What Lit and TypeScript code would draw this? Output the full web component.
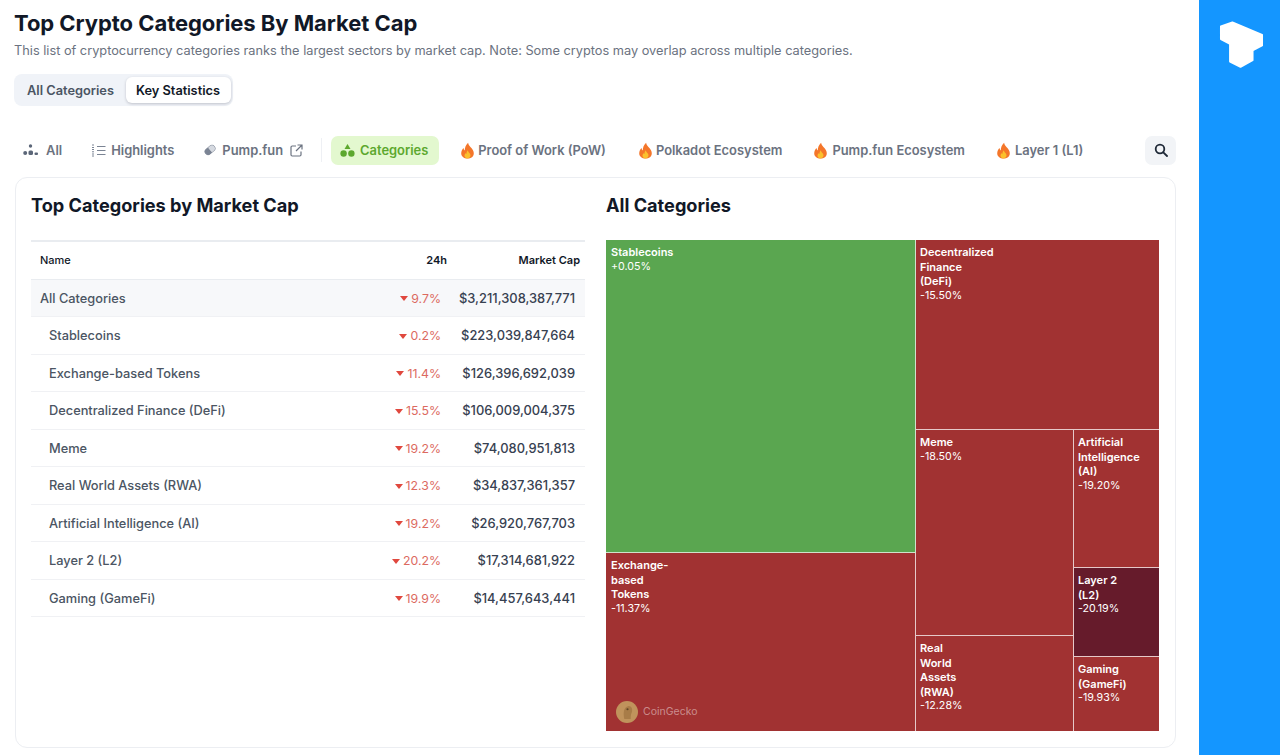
import { LitElement, html, css } from "lit";
import { customElement } from "lit/decorators.js";

const flame = html`<svg class="flame" viewBox="0 0 16 18" width="15" height="17"><path fill="#f4762a" d="M8.600.6c.5 2.700 2.200 3.900 3.600 5.700 1.400 1.700 2.500 3.400 2.500 5.500 0 3.500-2.900 5.800-6.700 5.800S1.300 15.300 1.300 11.900c0-2.300 1.100-4.100 2.500-5.500.1 1.200.5 2 1.300 2.600C5 5.800 6.300 2.700 8.600.6z"/><path fill="#fbc02d" d="M8.200 8.600c.3 1.400 1.100 2 1.900 3 .7.800 1.100 1.600 1.100 2.500 0 1.900-1.400 3.300-3.200 3.300s-3.200-1.300-3.200-3.100c0-1.100.5-2 1.200-2.700.1.500.3.900.7 1.200.1-1.500.7-3 1.500-4.200z"/></svg>`;

const rows: [string, string, string, boolean?][] = [
  ["All Categories", "9.7%", "$3,211,308,387,771", true],
  ["Stablecoins", "0.2%", "$223,039,847,664"],
  ["Exchange-based Tokens", "11.4%", "$126,396,692,039"],
  ["Decentralized Finance (DeFi)", "15.5%", "$106,009,004,375"],
  ["Meme", "19.2%", "$74,080,951,813"],
  ["Real World Assets (RWA)", "12.3%", "$34,837,361,357"],
  ["Artificial Intelligence (AI)", "19.2%", "$26,920,767,703"],
  ["Layer 2 (L2)", "20.2%", "$17,314,681,922"],
  ["Gaming (GameFi)", "19.9%", "$14,457,643,441"],
];

@customElement("app-root")
export class AppRoot extends LitElement {
  static styles = css`
    :host { display: flex; width: 1280px; height: 755px; overflow: hidden; background: #fff;
      font-family: Inter, "Noto Sans", sans-serif; color: #111827; }
    .main { width: 1199px; padding: 10px 23px 0 14px; box-sizing: border-box; }
    .side { width: 81px; background: #1496ff; padding: 20px 0 0 20px; box-sizing: border-box; }
    h1 { margin: 0; font-size: 22px; line-height: 26px; font-weight: 700; color: #111827; letter-spacing: -0.05px; }
    .sub { margin: 6px 0 0; font-size: 12.78px; line-height: 18px; color: #6b7280; }
    .seg { display: inline-flex; margin-top: 14px; background: #f0f3f8; border-radius: 8px; padding: 3px 2px 3px 0; height: 32px; box-sizing: border-box; vertical-align: top; }
    .seg span { display: flex; align-items: center; font-size: 12.8px; font-weight: 600; color: #4b5563; padding: 0 12px 0 13px; border-radius: 6px; }
    .seg .on { background: #fff; color: #111827; padding: 0 11px 0 10px; box-shadow: 0 1px 3px rgba(17,24,39,.22); }
    .tabs { display: flex; align-items: center; margin-top: 29px; height: 30px; font-size: 12.9px; font-weight: 600; color: #6b7280; }
    .tab { display: flex; align-items: center; gap: 5px; white-space: nowrap; }
    .a { margin-left: 9px; gap: 8px; }
    .h { margin-left: 29px; }
    .p { margin-left: 29px; }
    .sep { width: 1px; height: 24px; background: #eef0f4; margin: 0 9px 0 18px; }
    .cat { background: #e3f8cf; color: #5ca82e; border-radius: 7px; height: 29px; padding: 0 11px 0 9px; }
    .f1 { margin-left: 21px; gap: 3px; }
    .f2 { margin-left: 32px; gap: 3px; }
    .f3 { margin-left: 31px; gap: 4px; }
    .f4 { margin-left: 31px; gap: 4px; }
    .search { margin-left: auto; width: 31px; height: 29px; border-radius: 7px; background: #f2f4f7; display: flex; align-items: center; justify-content: center; }
    .card { margin: 12px 0 0 1px; height: 571px; border: 1px solid #eceef2; border-radius: 12px; box-sizing: border-box; padding: 14px 16px 0 15px; display: flex; }
    .left { width: 554px; }
    .right { margin-left: 21px; width: 553px; }
    h2 { margin: 0; font-size: 18.15px; line-height: 26px; font-weight: 700; color: #111827; }
    .table { margin-top: 22px; border-top: 2px solid #e9ecf0; }
    .row { display: flex; align-items: center; height: 37.5px; box-sizing: border-box; border-bottom: 1px solid #f0f1f4; font-size: 12.8px; color: #4b5563; }
    .row.head { height: 37.8px; padding-bottom: 1px; border-bottom-color: #e9ecf0; font-size: 11px; font-weight: 600; color: #111827; }
    .row.all { background: #f7f8fa; }
    .name { flex: 1; padding-left: 18px; font-weight: 500; }
    .all .name, .head .name { padding-left: 9px; }
    .pct { width: 90px; display: flex; justify-content: flex-end; align-items: center; gap: 3px; color: #dc6a5f; font-size: 12.3px; }
    .head .pct { color: #111827; width: 96px; font-size: 11px; }
    .cap { width: 144px; text-align: right; padding-right: 10px; box-sizing: border-box; font-weight: 500; color: #374151; font-size: 12.9px; }
    .head .cap { width: 138px; padding-right: 5px; font-size: 11px; color: #111827; font-weight: 600; }
    .tri { width: 0; height: 0; border-left: 4.500px solid transparent; border-right: 4.500px solid transparent; border-top: 5px solid #e0483e; margin-top: 1px; }
    .map { margin-top: 22px; height: 491px; width: 553px; display: flex; font-size: 10.7px; line-height: 14.6px; color: #fff; }
    .col { display: flex; flex-direction: column; }
    .r { display: flex; }
    .t { box-sizing: border-box; padding: 5px 4px; background: #a13232; border-right: 1px solid #e6c9c9; border-bottom: 1px solid #e6c9c9; position: relative; }
    .t b { display: block; font-weight: 600; font-size: 11px; }
    .lead { padding-left: 5px; }
    .end { border-right: 0; }
    .bot { border-bottom: 0; }
    .green { background: #5aa650; border-color: #cfe3cb; }
    .dark { background: #661b2b; }
    .gecko { position: absolute; left: 10px; bottom: 8px; display: flex; align-items: center; gap: 5px; font-size: 10.5px; color: rgba(255,255,255,.45); }
    .coin { width: 22px; height: 22px; border-radius: 50%; background: #c0935c; display: flex; align-items: center; justify-content: center; }
  `;

  cell(name: string[], val: string, w: number, h: number, cls = "") {
    return html`<div class="t ${cls}" style="width:${w}px;height:${h}px">
      <b>${name.map((n) => html`${n}<br />`)}</b>${val}
    </div>`;
  }

  render() {
    return html`
      <div class="main">
        <h1>Top Crypto Categories By Market Cap</h1>
        <p class="sub">This list of cryptocurrency categories ranks the largest sectors by market cap. Note: Some cryptos may overlap across multiple categories.</p>
        <div class="seg"><span>All Categories</span><span class="on">Key Statistics</span></div>
        <div class="tabs">
          <div class="tab a"><svg width="15" height="12" viewBox="0 0 15 12" fill="#5b6678"><circle cx="7.500" cy="2" r="1.700"/><circle cx="2.200" cy="9" r="2"/><rect x="5.500" y="6.500" width="4.500" height="4.500" rx="1.500"/><rect x="11.500" y="8.500" width="3.500" height="2.500" rx="1"/></svg>All</div>
          <div class="tab h"><svg width="15" height="13" viewBox="0 0 15 13" fill="none" stroke="#7b8494" stroke-width="1.100"><path d="M6 2.500h8.500M6 6.500h8.500M6 10.500h8.500"/><path d="M1 1h2M1 3.500h2M1 5.500h2M1 7.800h2M1 10h2M1 12h2" stroke-width="1"/></svg>Highlights</div>
          <div class="tab p"><svg width="14" height="14" viewBox="0 0 14 14"><g transform="rotate(-40 7 7)"><rect x="1.500" y="4" width="11" height="6" rx="3" fill="#fff" stroke="#7b8494"/><path d="M7 4h2.500a3 3 0 0 1 0 6H7z" fill="#d5d9e0"/><path d="M1.500 7a3 3 0 0 1 3-3H7v6H4.500a3 3 0 0 1-3-3z" fill="#7b8494"/></g></svg>Pump.fun<svg width="13" height="13" viewBox="0 0 13 13" fill="none" stroke="#6b7280" stroke-width="1.200" style="margin-left:2px"><path d="M6 2H2.200A1.200 1.200 0 0 0 1 3.200v7.600A1.200 1.200 0 0 0 2.200 12h7.600a1.200 1.200 0 0 0 1.200-1.200V7.500M7.500 1H12v4.500M12 1 6 7"/></svg></div>
          <div class="sep"></div>
          <div class="tab cat"><svg width="15" height="13" viewBox="0 0 15 13" fill="#5ca82e"><path d="M7.500 0 10.500 5h-6z"/><circle cx="3.600" cy="9.500" r="3.200"/><circle cx="11.400" cy="9.500" r="3.200"/></svg>Categories</div>
          <div class="tab f1">${flame}Proof of Work (PoW)</div>
          <div class="tab f2">${flame}Polkadot Ecosystem</div>
          <div class="tab f3">${flame}Pump.fun Ecosystem</div>
          <div class="tab f4">${flame}Layer 1 (L1)</div>
          <div class="search"><svg width="14" height="14" viewBox="0 0 14 14" fill="none" stroke="#1f2937" stroke-width="1.800"><circle cx="6" cy="6" r="4.300"/><path d="m9.300 9.300 3.700 3.700" stroke-linecap="round"/></svg></div>
        </div>
        <div class="card">
          <div class="left">
            <h2>Top Categories by Market Cap</h2>
            <div class="table">
              <div class="row head"><div class="name">Name</div><div class="pct">24h</div><div class="cap">Market Cap</div></div>
              ${rows.map(([n, p, c, all]) => html`<div class="row ${all ? "all" : ""}"><div class="name">${n}</div><div class="pct"><i class="tri"></i>${p}</div><div class="cap">${c}</div></div>`)}
            </div>
          </div>
          <div class="right">
            <h2>All Categories</h2>
            <div class="map">
              <div class="col">
                ${this.cell(["Stablecoins"], "+0.05%", 310, 313, "green lead")}
                <div class="t bot lead" style="width:310px;height:178px">
                  <b>Exchange-<br />based<br />Tokens</b>-11.37%
                  <div class="gecko"><span class="coin"><svg width="13" height="15" viewBox="0 0 12 14"><path d="M3 13C2 8 2 2 7 1c3 0 4 3 3 6-1 2-1 4-1 6z" fill="#a87c48"/><circle cx="6" cy="4" r="1" fill="#5f4526"/></svg></span>CoinGecko</div>
                </div>
              </div>
              <div class="col">
                ${this.cell(["Decentralized", "Finance", "(DeFi)"], "-15.50%", 243, 190, "end")}
                <div class="r">
                  <div class="col">
                    ${this.cell(["Meme"], "-18.50%", 158, 206)}
                    ${this.cell(["Real", "World", "Assets", "(RWA)"], "-12.28%", 158, 95, "bot")}
                  </div>
                  <div class="col">
                    ${this.cell(["Artificial", "Intelligence", "(AI)"], "-19.20%", 85, 138, "end")}
                    ${this.cell(["Layer 2", "(L2)"], "-20.19%", 85, 89, "end dark")}
                    ${this.cell(["Gaming", "(GameFi)"], "-19.93%", 85, 74, "end bot")}
                  </div>
                </div>
              </div>
            </div>
          </div>
        </div>
      </div>
      <div class="side">
        <svg width="45" height="49" viewBox="-1 -1 46 49" fill="#fff" stroke="#fff" stroke-width="2" stroke-linejoin="round"><path d="M1 5 12.700 1 43 13.800V24.500l-9.700 5V39.500L21 46.300 10.300 41V23L1 18z"/></svg>
      </div>
    `;
  }
}
